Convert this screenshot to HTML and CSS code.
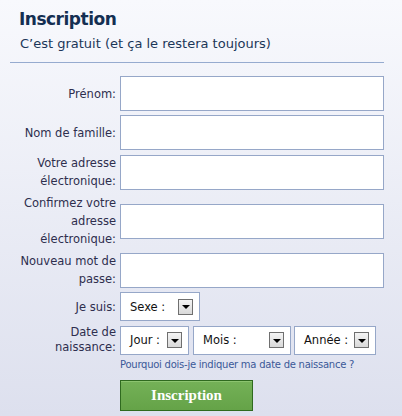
FILE: index.html
```html
<!DOCTYPE html>
<html lang="fr">
<head>
<meta charset="utf-8">
<title>Inscription</title>
<link rel="stylesheet" href="styles.css">
</head>
<body>
<div class="page">
  <h1 class="title">Inscription</h1>
  <p class="subtitle">C’est gratuit (et ça le restera toujours)</p>
  <hr class="rule">
  <form class="form">
    <label class="lbl">Prénom:</label>
    <input class="field" type="text">

    <label class="lbl">Nom de famille:</label>
    <input class="field" type="text">

    <label class="lbl">Votre adresse<br>électronique:</label>
    <input class="field" type="text">

    <label class="lbl">Confirmez votre<br>adresse<br>électronique:</label>
    <input class="field" type="text">

    <label class="lbl">Nouveau mot de<br>passe:</label>
    <input class="field" type="password">

    <span class="lbl">Je suis:</span>
    <div class="selects">
      <div class="select w-sexe"><span class="sel-text">Sexe :</span><span class="arrow"></span></div>
    </div>

    <span class="lbl lbl-tight">Date de<br>naissance:</span>
    <div class="selects">
      <div class="select w-jour"><span class="sel-text">Jour :</span><span class="arrow"></span></div>
      <div class="select w-mois"><span class="sel-text">Mois :</span><span class="arrow"></span></div>
      <div class="select w-annee"><span class="sel-text">Année :</span><span class="arrow"></span></div>
    </div>

    <span class="spacer"></span>
    <a class="why" href="#">Pourquoi dois-je indiquer ma date de naissance ?</a>

    <span class="spacer"></span>
    <div class="actions"><button class="submit" type="button">Inscription</button></div>
  </form>
</div>
</body>
</html>
```

FILE: styles.css
```css
html, body {
  margin: 0;
  padding: 0;
  height: 100%;
}

body {
  background: linear-gradient(to bottom, #f8f9fd 0%, #dde0ee 100%);
  font-family: "DejaVu Sans", Verdana, sans-serif;
  color: #333344;
}

.page {
  padding: 9px 0 0 10px;
  width: 375px;
}

.title {
  margin: 0 0 0 9px;
  font-size: 17px;
  line-height: 20px;
  font-weight: bold;
  letter-spacing: -0.5px;
  color: #142f52;
}

.subtitle {
  margin: 6px 0 0 10px;
  font-size: 13px;
  line-height: 18px;
  color: #1c3658;
}

.rule {
  margin: 9px 0 0 0;
  border: 0;
  height: 1px;
  width: 374px;
  background: #96abcf;
}

.form {
  margin-top: 13px;
  display: grid;
  grid-template-columns: 106px 264px;
  column-gap: 4px;
  row-gap: 4px;
  align-items: center;
}

.lbl {
  text-align: right;
  font-size: 11.5px;
  line-height: 18px;
  white-space: nowrap;
  color: #2e2e4e;
}

.lbl-tight {
  line-height: 15px;
}

.field {
  box-sizing: border-box;
  height: 35px;
  width: 264px;
  margin: 0;
  border: 1px solid #96a7c8;
  background: #fff;
  font: inherit;
}

.selects {
  display: flex;
  gap: 4px;
}

.select {
  box-sizing: border-box;
  height: 29px;
  display: flex;
  align-items: center;
  justify-content: space-between;
  padding: 0 6px 0 9px;
  background: #fff;
  border: 1px solid #96a7c8;
  font-size: 11.5px;
  color: #111;
}

.w-sexe { width: 80px; }
.w-jour { width: 69px; }
.w-mois { width: 98px; }
.w-annee { width: 82px; margin-left: -1px; }

.arrow {
  box-sizing: border-box;
  width: 15px;
  height: 16px;
  border: 1px solid #6f6f6f;
  background: linear-gradient(to bottom, #f4f4f4, #d9d9d9);
  display: flex;
  align-items: center;
  justify-content: center;
}

.arrow::before {
  content: "";
  width: 0;
  height: 0;
  border-left: 4px solid transparent;
  border-right: 4px solid transparent;
  border-top: 4px solid #000;
  margin-top: 1px;
}

.why {
  font-size: 10px;
  line-height: 12px;
  letter-spacing: -0.25px;
  color: #3b5998;
  text-decoration: none;
  white-space: nowrap;
}

.actions {
  margin-top: 5px;
}

.submit {
  box-sizing: border-box;
  width: 133px;
  height: 31px;
  margin: 0;
  padding: 0;
  border: 1px solid #2f6a1f;
  background: linear-gradient(to bottom, #74b157 0%, #65a348 100%);
  box-shadow: inset 0 1px 0 #8cc46f;
  color: #fff;
  font-family: "Liberation Serif", "Times New Roman", serif;
  font-weight: bold;
  font-size: 15px;
  cursor: pointer;
}
```
